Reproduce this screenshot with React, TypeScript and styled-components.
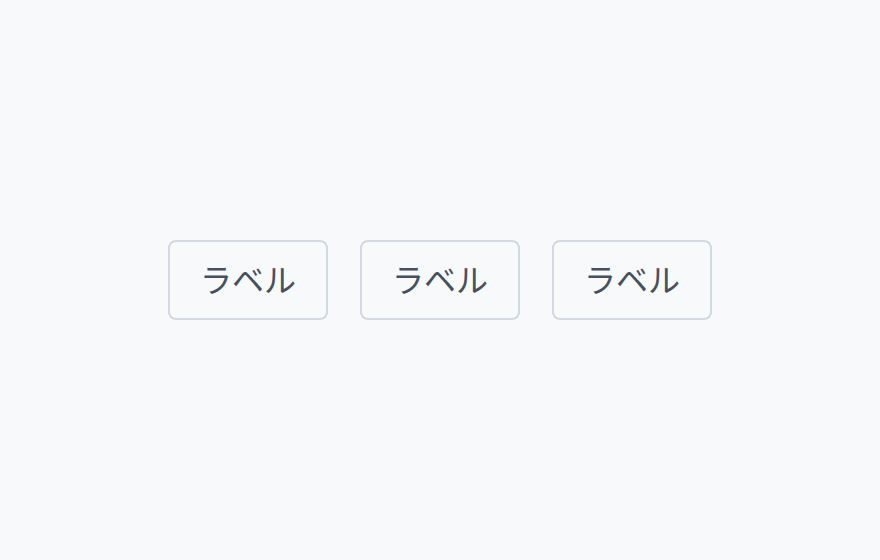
import styled, { createGlobalStyle } from 'styled-components';

const GlobalStyle = createGlobalStyle`
  html, body {
    margin: 0;
    padding: 0;
    background: #f8f9fb;
  }
  #root {
    height: 100vh;
  }
`;

const Page = styled.div`
  height: 100%;
  display: flex;
  align-items: center;
  justify-content: center;
  gap: 32px;
  font-family: "Noto Sans CJK JP", "Noto Sans", sans-serif;
`;

const LabelButton = styled.button`
  box-sizing: border-box;
  width: 160px;
  height: 80px;
  border: 2px solid #d3d8df;
  border-radius: 8px;
  background: #f8f9fb;
  color: #48505d;
  font-family: inherit;
  font-size: 32px;
  font-weight: 400;
  line-height: 1;
  padding: 0 0 5px;
  cursor: pointer;
`;

export default function App() {
  const labels = ['ラベル', 'ラベル', 'ラベル'];
  return (
    <>
      <GlobalStyle />
      <Page>
        {labels.map((label, i) => (
          <LabelButton key={i}>{label}</LabelButton>
        ))}
      </Page>
    </>
  );
}
